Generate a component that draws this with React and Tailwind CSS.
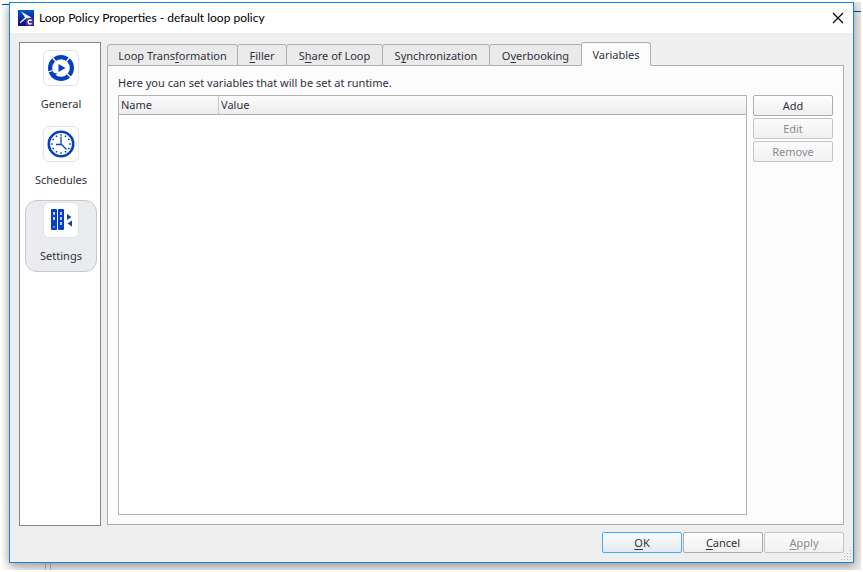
import { useState } from 'react';

const NAV_ITEMS = [
  { id: 'general', label: 'General', Icon: LoopIcon },
  { id: 'schedules', label: 'Schedules', Icon: ClockIcon },
  { id: 'settings', label: 'Settings', Icon: RackIcon },
];

// hotkey = index of the underlined letter
const TABS = [
  { label: 'Loop Transformation', hotkey: 10, width: 'w-[131px]' },
  { label: 'Filler', hotkey: 0, width: 'w-[50px]' },
  { label: 'Share of Loop', hotkey: 1, width: 'w-[97px]' },
  { label: 'Synchronization', hotkey: 1, width: 'w-[108px]' },
  { label: 'Overbooking', hotkey: 1, width: 'w-[93px]' },
  { label: 'Variables', hotkey: -1, width: 'w-[70px]' },
];

function AppIcon() {
  return (
    <svg width="16" height="16" viewBox="0 0 16 16" className="shrink-0" aria-hidden="true">
      <defs>
        <linearGradient id="logo" x1="0" y1="0" x2="0" y2="1">
          <stop offset="0" stopColor="#0558c8" />
          <stop offset="0.6" stopColor="#0a1fa0" />
          <stop offset="1" stopColor="#160c70" />
        </linearGradient>
      </defs>
      <rect width="16" height="16" fill="url(#logo)" />
      <path d="M3 1.5 L13.5 7.5 L8 8.8 L2 13.5 L2 12 L7 7.5 Z" fill="#e8f0ff" />
      <rect x="8" y="8.5" width="7.5" height="7" fill="#4a38a0" />
      <path d="M13.6 10.6 A2 2 0 1 0 13.6 13.4" fill="none" stroke="#fff" strokeWidth="1.3" />
    </svg>
  );
}

function LoopIcon() {
  return (
    <svg width="28" height="28" viewBox="0 0 28 28" aria-hidden="true">
      <circle cx="14" cy="14" r="10.9" fill="none" stroke="#0540c4" strokeWidth="4.2" />
      <path d="M14 14 L5 3 M14 14 L23 3 M14 14 L24.5 24 M14 14 L1 18" stroke="#fff" strokeWidth="1.2" />
      <path d="M3.5 18.5 L10.5 19.5 L4.5 23.5 Z" fill="#0540c4" />
      <path d="M11.5 10 L18.5 14 L11.5 18 Z" fill="#0540c4" />
    </svg>
  );
}

function ClockIcon() {
  const ticks = [0, 30, 60, 90, 120, 150, 180, 210, 240, 270, 300, 330];
  return (
    <svg width="28" height="28" viewBox="0 0 28 28" aria-hidden="true">
      <circle cx="14" cy="14" r="12.2" fill="#fff" stroke="#0540c4" strokeWidth="2.6" />
      {ticks.map((deg) => (
        <path key={deg} d="M14 4.2 V5.8" stroke="#0540c4" strokeWidth="1.5" transform={`rotate(${deg} 14 14)`} />
      ))}
      <path d="M14 6.5 V14 L19.5 19.5 M14.5 14.5 H9" fill="none" stroke="#0540c4" strokeWidth="1.3" />
    </svg>
  );
}

function RackIcon() {
  return (
    <svg width="28" height="28" viewBox="0 0 28 28" aria-hidden="true">
      <rect x="4" y="3" width="6" height="21" rx="1" fill="#0540c4" />
      <rect x="11" y="3" width="6" height="21" rx="1" fill="#0540c4" />
      <path d="M7 6 V9 M7 11 V14 M14 6 V9 M14 11 V14 M14 16 V19" stroke="#fff" strokeWidth="1.5" />
      <path d="M7 20 V21.5" stroke="#fff" strokeWidth="1" />
      <path d="M20 8 L24.5 11 L20 14 Z M25 14.5 L20.5 17.5 L25 20.5 Z" fill="#0540c4" />
    </svg>
  );
}

function HotkeyLabel({ text, hotkey }) {
  if (hotkey < 0) return text;
  return (
    <span>
      {text.slice(0, hotkey)}
      <span className="underline underline-offset-2">{text[hotkey]}</span>
      {text.slice(hotkey + 1)}
    </span>
  );
}

function DialogButton({ text, hotkey = -1, primary = false, disabled = false }) {
  let look = 'border-[#adadad] from-[#fefefe] to-[#f0f0f0] text-[#31313b]';
  if (primary) look = 'border-[#3daefd] from-[#fbfcfd] to-[#e4eaf0] text-[#31313b]';
  if (disabled) look = 'border-[#c4c4c4] from-[#fbfbfb] to-[#f1f1f1] text-[#8b8b94]';

  return (
    <button
      type="button"
      disabled={disabled}
      className={`flex h-[21px] w-20 items-center justify-center rounded-[2px] border bg-linear-to-b ${look}`}
    >
      <HotkeyLabel text={text} hotkey={hotkey} />
    </button>
  );
}

// Part of the main window that shows around the dialog
function Backdrop() {
  return (
    <div className="absolute inset-0 flex flex-col" aria-hidden="true">
      <div className="flex h-[10px] justify-between">
        <div className="h-[3px] w-4 border-b border-[#0540c4]" />
        <div className="w-4 border-b border-[#0a4aa8] bg-[#e6eaf2]" />
      </div>
      <div className="flex flex-1 justify-between bg-linear-to-r from-white from-0% to-[#f0f0f0] to-5%">
        <div className="ml-[43px] w-[6px] border-x border-[#b5b8be] bg-[#f2f2f2]" />
        <div className="w-4 bg-[#ececec]" />
      </div>
    </div>
  );
}

export default function App() {
  const [section, setSection] = useState('settings');
  const [activeTab, setActiveTab] = useState('Variables');

  return (
    <div className="relative h-screen overflow-hidden border-2 border-white bg-white px-[7px] pb-[7px] font-['Noto_Sans',sans-serif] text-[11px] leading-4 text-[#31313b]">
      <Backdrop />

      <div role="dialog" aria-labelledby="title" className="relative flex h-full flex-col border border-[#1883d7] bg-[#efefef] shadow-[0_3px_10px_rgba(0,0,0,0.4)]">
        <header className="flex h-[30px] shrink-0 items-center gap-[5px] bg-white pr-[9px] pl-2">
          <AppIcon />
          <h1 id="title" className="flex-1 font-['Lato',sans-serif] text-[12px] text-black">
            Loop Policy Properties - default loop policy
          </h1>
          <button type="button" aria-label="Close">
            <svg width="12" height="12" viewBox="0 0 12 12">
              <path d="M1 1 L11 11 M11 1 L1 11" stroke="#000" strokeWidth="1.2" />
            </svg>
          </button>
        </header>

        <div className="flex min-h-0 flex-1 flex-col gap-[7px] px-[9px] pt-[9px] pb-[9px]">
          <div className="flex min-h-0 flex-1 gap-[6px]">
            <nav className="mb-[-1px] flex w-[82px] shrink-0 flex-col gap-1 border border-[#82848f] bg-white pt-[5px] pl-[5px]">
              {NAV_ITEMS.map(({ id, label, Icon }) => (
                <button
                  key={id}
                  type="button"
                  onClick={() => setSection(id)}
                  className={`flex h-[72px] w-[72px] flex-col items-center rounded-xl border pt-px ${section === id ? 'border-[#c8c9cc] bg-[#ebecf0]' : 'border-transparent'}`}
                >
                  <span className="flex h-9 w-9 items-center justify-center rounded-md border border-[#e3e3e3] bg-white">
                    <Icon />
                  </span>
                  <span className="mt-[10px]">{label}</span>
                </button>
              ))}
            </nav>

            <main className="flex min-w-0 flex-1 flex-col">
              <div role="tablist" className="z-10 mb-[-1px] flex h-6 items-end">
                {TABS.map(({ label, hotkey, width }) => (
                  <button
                    key={label}
                    type="button"
                    role="tab"
                    aria-selected={activeTab === label}
                    onClick={() => setActiveTab(label)}
                    className={`${width} mr-[-1px] rounded-t-[3px] border border-[#b0b0b0] pt-[2px] ${activeTab === label ? 'h-6 border-b-[#fcfcfc] bg-[#fcfcfc]' : 'h-[22px] bg-[#eaeaea]'}`}
                  >
                    <HotkeyLabel text={label} hotkey={hotkey} />
                  </button>
                ))}
              </div>

              <section className="flex min-h-0 flex-1 flex-col gap-1 border border-[#adadad] bg-[#fcfcfc] px-[10px] pt-[9px] pb-[9px]">
                <p>Here you can set variables that will be set at runtime.</p>
                <div className="flex min-h-0 flex-1 gap-[6px]">
                  <div className="min-w-0 flex-1 border border-[#b4b4b4] bg-white">
                    <table className="w-full table-fixed border-separate border-spacing-0">
                      <thead>
                        <tr className="h-[19px] bg-linear-to-b from-[#fcfcfc] to-[#ececec] text-left">
                          <th className="w-[100px] border-r border-b border-r-[#c8c8c8] border-b-[#adadad] p-0 pl-[2px] font-normal">Name</th>
                          <th className="border-b border-[#adadad] p-0 pl-[2px] font-normal">Value</th>
                        </tr>
                      </thead>
                      <tbody />
                    </table>
                  </div>
                  <div className="flex flex-col gap-[2px]">
                    <DialogButton text="Add" />
                    <DialogButton text="Edit" disabled />
                    <DialogButton text="Remove" disabled />
                  </div>
                </div>
              </section>
            </main>
          </div>

          <footer className="flex justify-end gap-px">
            <DialogButton text="OK" hotkey={0} primary />
            <DialogButton text="Cancel" hotkey={0} />
            <DialogButton text="Apply" hotkey={0} disabled />
          </footer>
        </div>

        {/* resize grip */}
        <svg width="11" height="11" viewBox="0 0 11 11" className="absolute right-px bottom-px" aria-hidden="true">
          <path
            d="M9 0h1v1h-1z M6 3h1v1h-1z M9 3h1v1h-1z M3 6h1v1h-1z M6 6h1v1h-1z M9 6h1v1h-1z M0 9h1v1h-1z M3 9h1v1h-1z M6 9h1v1h-1z M9 9h1v1h-1z"
            fill="#b8b8b8"
          />
        </svg>
      </div>
    </div>
  );
}
